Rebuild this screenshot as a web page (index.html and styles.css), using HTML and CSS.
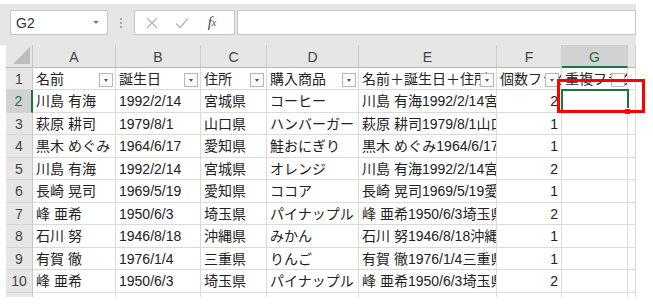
FILE: index.html
```html
<!DOCTYPE html>
<html lang="ja">
<head>
<meta charset="utf-8">
<title>Sheet</title>
<link rel="stylesheet" href="styles.css">
</head>
<body>
<div class="app">
  <div class="toolbar">
    <div class="namebox"><span>G2</span><span class="nb-arrow"></span></div>
    <div class="grip"><i></i><i></i><i></i></div>
    <div class="fxbox">
      <span class="fxbtn"><svg width="12" height="12" viewBox="0 0 12 12"><path d="M1 1L11 11M11 1L1 11" stroke="#b4b4b4" stroke-width="1.3" fill="none"/></svg></span>
      <span class="fxbtn"><svg width="14" height="12" viewBox="0 0 14 12"><path d="M1 6.5L5 10.5L13 1.5" stroke="#b4b4b4" stroke-width="1.3" fill="none"/></svg></span>
      <span class="fxbtn fx"><i>f</i><sub>x</sub></span>
    </div>
    <div class="formula"></div>
  </div>
  <div class="sheet">
    <div class="corner"><span class="tri"></span></div>
    <div class="ch">A</div><div class="ch">B</div><div class="ch">C</div><div class="ch">D</div><div class="ch">E</div><div class="ch">F</div><div class="ch sel">G</div><div class="ch"></div>

    <div class="rh">1</div>
    <div class="c hd">名前<span class="fb"></span></div>
    <div class="c hd">誕生日<span class="fb"></span></div>
    <div class="c hd">住所<span class="fb"></span></div>
    <div class="c hd">購入商品<span class="fb"></span></div>
    <div class="c hd">名前＋誕生日＋住所<span class="fb"></span></div>
    <div class="c hd">個数フラグ<span class="fb"></span></div>
    <div class="c hd">重複フラグ<span class="fb"></span></div>
    <div class="c"></div>

    <div class="rh sel">2</div>
    <div class="c">川島 有海</div><div class="c">1992/2/14</div><div class="c">宮城県</div><div class="c">コーヒー</div><div class="c">川島 有海1992/2/14宮城県</div><div class="c num">2</div><div class="c"></div><div class="c"></div>

    <div class="rh">3</div>
    <div class="c">萩原 耕司</div><div class="c">1979/8/1</div><div class="c">山口県</div><div class="c">ハンバーガー</div><div class="c">萩原 耕司1979/8/1山口県</div><div class="c num">1</div><div class="c"></div><div class="c"></div>

    <div class="rh">4</div>
    <div class="c">黒木 めぐみ</div><div class="c">1964/6/17</div><div class="c">愛知県</div><div class="c">鮭おにぎり</div><div class="c">黒木 めぐみ1964/6/17愛知県</div><div class="c num">1</div><div class="c"></div><div class="c"></div>

    <div class="rh">5</div>
    <div class="c">川島 有海</div><div class="c">1992/2/14</div><div class="c">宮城県</div><div class="c">オレンジ</div><div class="c">川島 有海1992/2/14宮城県</div><div class="c num">2</div><div class="c"></div><div class="c"></div>

    <div class="rh">6</div>
    <div class="c">長崎 晃司</div><div class="c">1969/5/19</div><div class="c">愛知県</div><div class="c">ココア</div><div class="c">長崎 晃司1969/5/19愛知県</div><div class="c num">1</div><div class="c"></div><div class="c"></div>

    <div class="rh">7</div>
    <div class="c">峰 亜希</div><div class="c">1950/6/3</div><div class="c">埼玉県</div><div class="c">パイナップル</div><div class="c">峰 亜希1950/6/3埼玉県</div><div class="c num">2</div><div class="c"></div><div class="c"></div>

    <div class="rh">8</div>
    <div class="c">石川 努</div><div class="c">1946/8/18</div><div class="c">沖縄県</div><div class="c">みかん</div><div class="c">石川 努1946/8/18沖縄県</div><div class="c num">1</div><div class="c"></div><div class="c"></div>

    <div class="rh">9</div>
    <div class="c">有賀 徹</div><div class="c">1976/1/4</div><div class="c">三重県</div><div class="c">りんご</div><div class="c">有賀 徹1976/1/4三重県</div><div class="c num">1</div><div class="c"></div><div class="c"></div>

    <div class="rh">10</div>
    <div class="c">峰 亜希</div><div class="c">1950/6/3</div><div class="c">埼玉県</div><div class="c">パイナップル</div><div class="c">峰 亜希1950/6/3埼玉県</div><div class="c num">2</div><div class="c"></div><div class="c"></div>

    <div class="rh last"></div>
    <div class="c last"></div><div class="c last"></div><div class="c last"></div><div class="c last"></div><div class="c last"></div><div class="c last"></div><div class="c last"></div><div class="c last"></div>
  </div>
  <div class="selbox"><span class="handle"></span></div>
  <div class="redbox"></div>
</div>
</body>
</html>
```

FILE: styles.css
```css
html, body {
  margin: 0;
  padding: 0;
  background: #ffffff;
}
body {
  font-family: "Liberation Sans", "Noto Sans CJK JP", sans-serif;
  width: 653px;
  height: 307px;
  overflow: hidden;
}
.app {
  position: relative;
  width: 636px;
  padding-top: 4px;
}
.toolbar {
  height: 41px;
  background: #e6e6e6;
  display: flex;
  align-items: flex-start;
  padding: 6px 0 0 10px;
  box-sizing: border-box;
}
.namebox {
  width: 98px;
  height: 25px;
  box-sizing: border-box;
  border: 1px solid #c6c6c6;
  background: #fff;
  display: flex;
  align-items: center;
  justify-content: space-between;
  padding: 0 8px 0 5px;
  font-size: 14px;
  color: #333;
}
.nb-arrow {
  width: 0;
  height: 0;
  border-left: 3px solid transparent;
  border-right: 3px solid transparent;
  border-top: 3px solid #7a7a7a;
}
.grip {
  width: 26px;
  height: 25px;
  display: flex;
  flex-direction: column;
  align-items: center;
  justify-content: center;
  gap: 2px;
}
.grip i {
  display: block;
  width: 2px;
  height: 2px;
  background: #a8a8a8;
}
.fxbox {
  width: 101px;
  height: 25px;
  box-sizing: border-box;
  background: #fff;
  border: 1px solid #c6c6c6;
  display: flex;
  padding-left: 2px;
}
.fxbtn {
  width: 30px;
  display: flex;
  align-items: center;
  justify-content: center;
}
.fx {
  font-family: "Liberation Serif", serif;
  font-size: 15px;
  color: #444;
}
.fx sub {
  font-size: 10px;
  font-style: italic;
  vertical-align: -2px;
}
.formula {
  margin-left: 2px;
  flex: 1;
  height: 25px;
  box-sizing: border-box;
  background: #fff;
  border: 1px solid #c6c6c6;
}
.sheet {
  margin-left: 6px;
  display: grid;
  grid-template-columns: 27px 83px 85px 66px 92px 138px 65px 66px 8px;
  grid-template-rows: 23px 22px 23px 22px 23px 22px 23px 22px 23px 22px 23px 4px;
}
.corner {
  position: relative;
  background: #e6e6e6;
  border-right: 1px solid #c8c8c8;
  border-bottom: 1px solid #b9b9b9;
}
.tri {
  position: absolute;
  right: 2px;
  bottom: 3px;
  width: 17px;
  height: 17px;
  background: #bdbdbd;
  clip-path: polygon(100% 0, 100% 100%, 0 100%);
}
.ch {
  background: #e6e6e6;
  border-right: 1px solid #cdcdcd;
  border-bottom: 1px solid #b9b9b9;
  display: flex;
  align-items: center;
  justify-content: center;
  padding-top: 2px;
  box-sizing: border-box;
  font-size: 14px;
  color: #444;
  overflow: hidden;
}
.ch.sel {
  background: #d2d2d2;
  color: #217346;
  border-bottom: 2px solid #217346;
}
.rh {
  background: #e6e6e6;
  border-right: 1px solid #c8c8c8;
  border-bottom: 1px solid #d4d4d4;
  display: flex;
  align-items: center;
  justify-content: center;
  font-size: 14px;
  color: #444;
  box-sizing: border-box;
}
.rh.sel {
  background: #d2d2d2;
  color: #217346;
  border-right: 2px solid #217346;
}
.c {
  position: relative;
  border-right: 1px solid #dadada;
  border-bottom: 1px solid #dadada;
  box-sizing: border-box;
  overflow: hidden;
  white-space: pre;
  padding-left: 3px;
  display: flex;
  align-items: center;
  font-size: 14px;
  line-height: 1;
  color: #222;
}
.c.num {
  justify-content: flex-end;
  padding-right: 3px;
}
.last {
  border-bottom: none;
}
.fb {
  position: absolute;
  right: 2px;
  bottom: 2px;
  width: 14px;
  height: 14px;
  box-sizing: border-box;
  background: #fafafa;
  border: 1px solid #b8b8b8;
}
.fb::after {
  content: "";
  position: absolute;
  left: 4px;
  top: 5px;
  border-left: 2.5px solid transparent;
  border-right: 2.5px solid transparent;
  border-top: 3px solid #555;
}
.selbox {
  position: absolute;
  left: 561px;
  top: 89px;
  width: 68px;
  height: 24px;
  box-sizing: border-box;
  border: 2px solid #217346;
}
.handle {
  position: absolute;
  right: -4px;
  bottom: -4px;
  width: 5px;
  height: 5px;
  background: #217346;
  border: 1px solid #fff;
}
.redbox {
  position: absolute;
  left: 557px;
  top: 79px;
  width: 88px;
  height: 34px;
  box-sizing: border-box;
  border: 3px solid #f00;
}
```
